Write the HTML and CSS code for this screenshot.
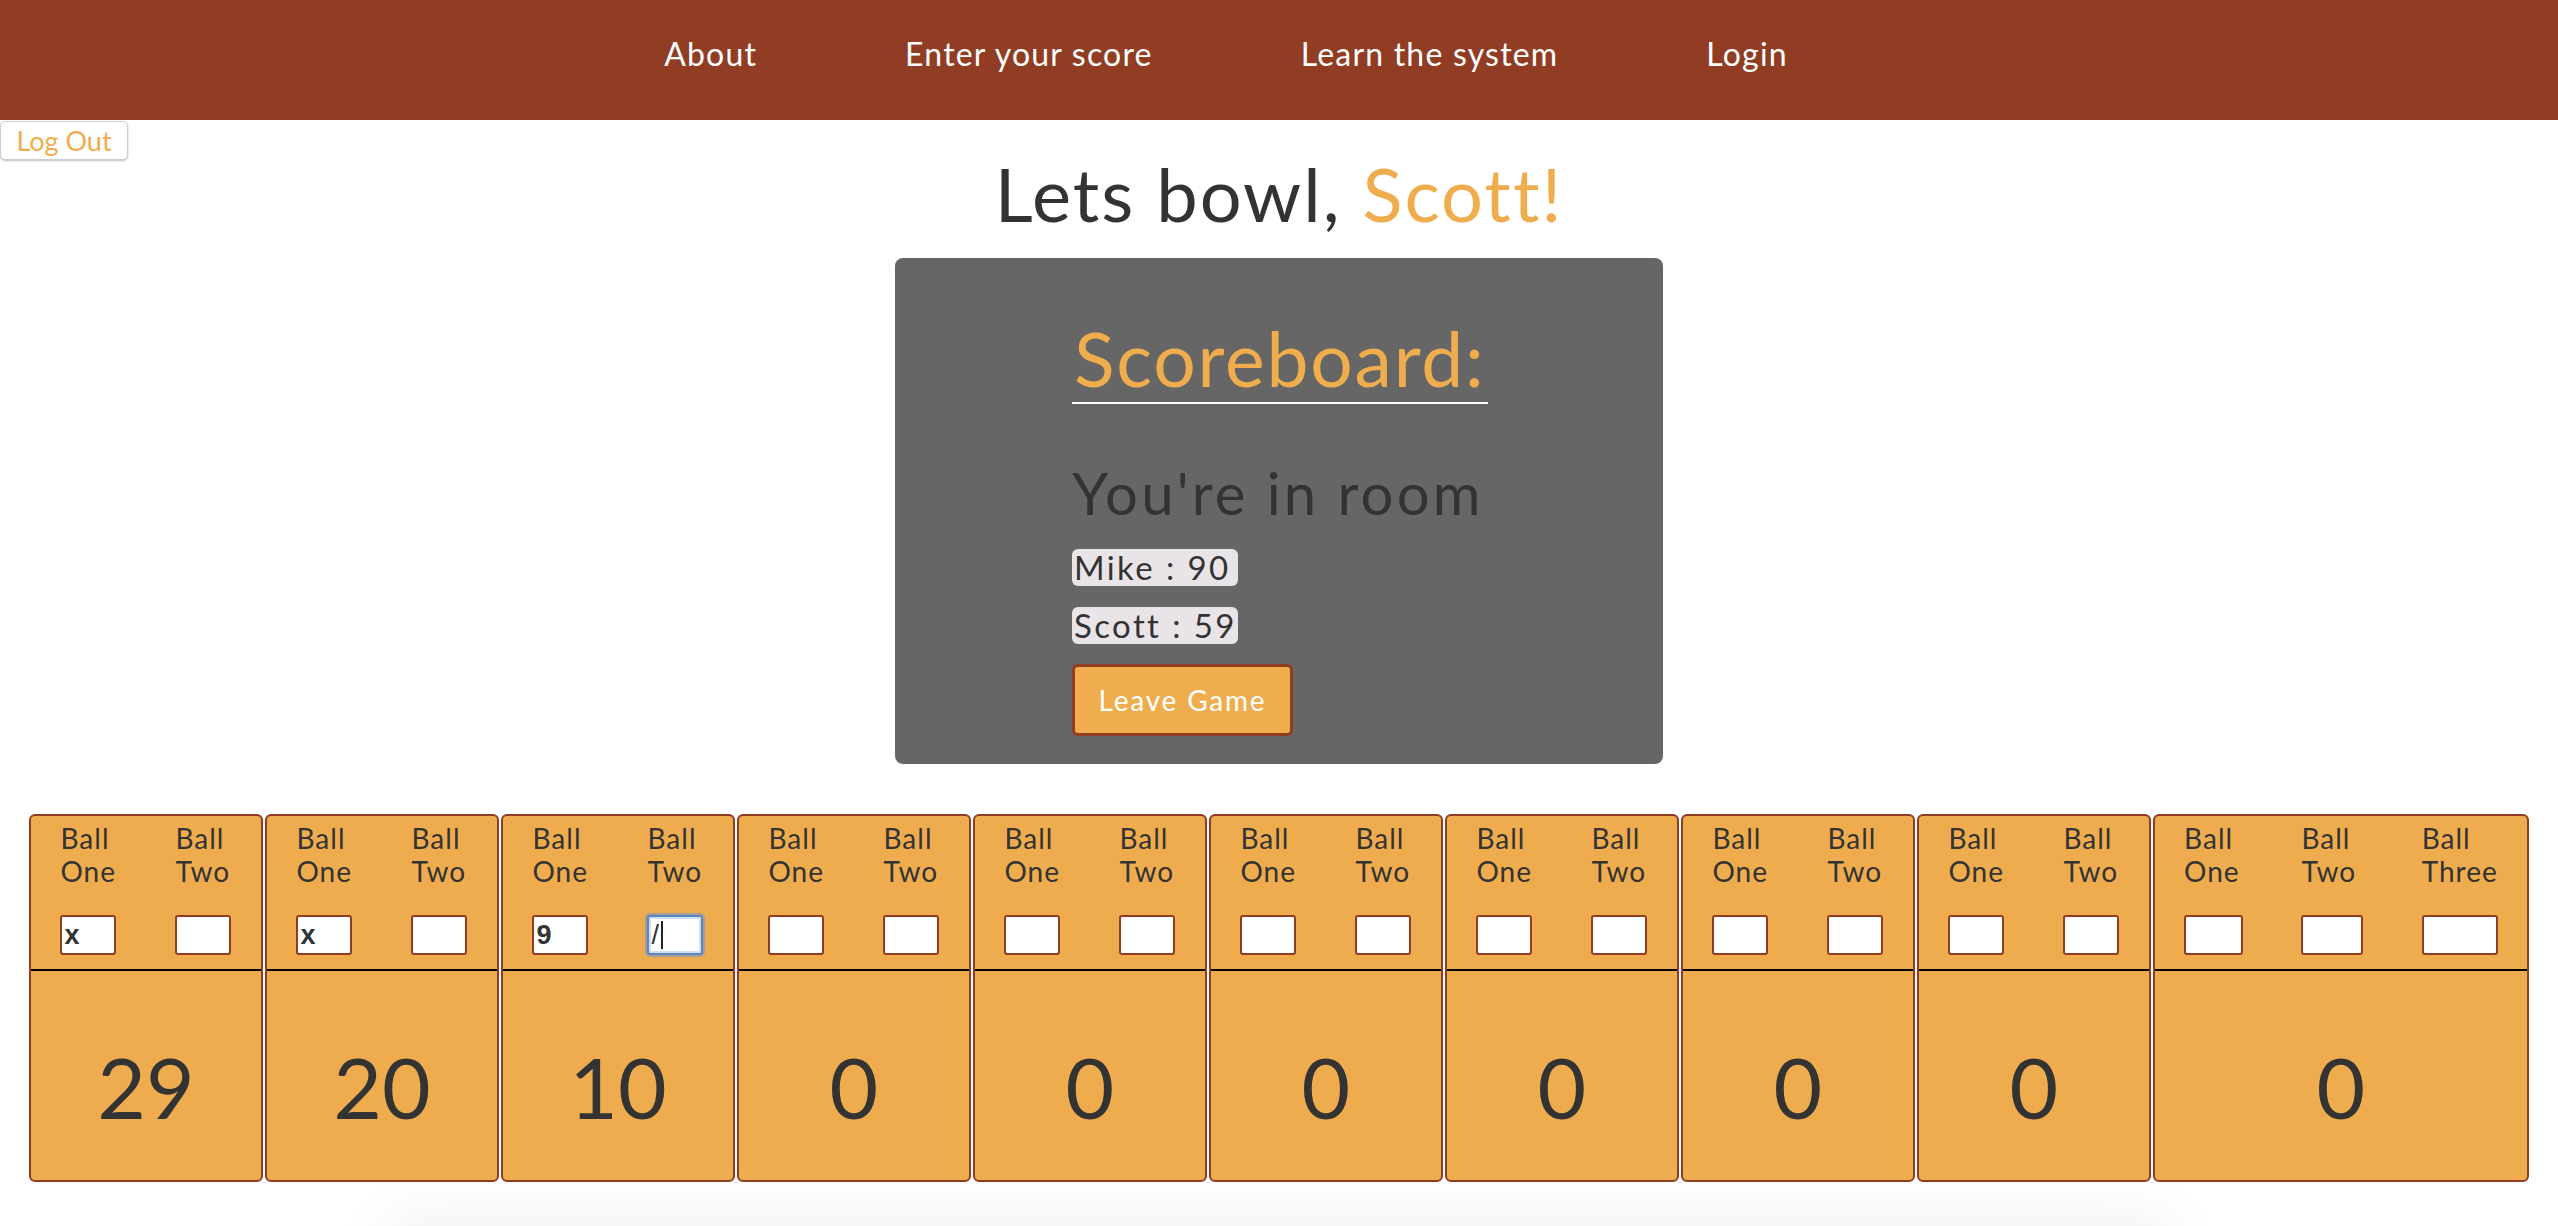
FILE: index.html
```html
<!DOCTYPE html>
<html lang="en">
<head>
<meta charset="utf-8">
<title>Lets bowl</title>
<link rel="stylesheet" href="styles.css">
</head>
<body>
<nav class="topnav">
  <a class="nav-link" href="#">About</a>
  <a class="nav-link" href="#">Enter your score</a>
  <a class="nav-link" href="#">Learn the system</a>
  <a class="nav-link" href="#">Login</a>
</nav>
<button class="logout">Log Out</button>
<h1 class="greeting">Lets bowl, <span class="accent">Scott!</span></h1>
<section class="board">
  <div class="board-inner">
    <h2 class="board-title">Scoreboard:</h2>
    <h3 class="room">You're in room</h3>
    <div class="player"><span class="pill">Mike : 90</span></div>
    <div class="player"><span class="pill">Scott : 59</span></div>
    <button class="leave">Leave Game</button>
  </div>
</section>
<div class="scorecard">
  <div class="frame">
    <div class="balls">
      <label class="ball"><span class="ball-label">Ball<br>One</span><input class="ball-input" value="x"></label>
      <label class="ball"><span class="ball-label">Ball<br>Two</span><input class="ball-input" value=""></label>
    </div>
    <div class="total">29</div>
  </div>
  <div class="frame">
    <div class="balls">
      <label class="ball"><span class="ball-label">Ball<br>One</span><input class="ball-input" value="x"></label>
      <label class="ball"><span class="ball-label">Ball<br>Two</span><input class="ball-input" value=""></label>
    </div>
    <div class="total">20</div>
  </div>
  <div class="frame">
    <div class="balls">
      <label class="ball"><span class="ball-label">Ball<br>One</span><input class="ball-input" value="9"></label>
      <label class="ball"><span class="ball-label">Ball<br>Two</span><span class="caret-wrap"><input class="ball-input focused" value="/"></span></label>
    </div>
    <div class="total">10</div>
  </div>
  <div class="frame">
    <div class="balls">
      <label class="ball"><span class="ball-label">Ball<br>One</span><input class="ball-input" value=""></label>
      <label class="ball"><span class="ball-label">Ball<br>Two</span><input class="ball-input" value=""></label>
    </div>
    <div class="total">0</div>
  </div>
  <div class="frame">
    <div class="balls">
      <label class="ball"><span class="ball-label">Ball<br>One</span><input class="ball-input" value=""></label>
      <label class="ball"><span class="ball-label">Ball<br>Two</span><input class="ball-input" value=""></label>
    </div>
    <div class="total">0</div>
  </div>
  <div class="frame">
    <div class="balls">
      <label class="ball"><span class="ball-label">Ball<br>One</span><input class="ball-input" value=""></label>
      <label class="ball"><span class="ball-label">Ball<br>Two</span><input class="ball-input" value=""></label>
    </div>
    <div class="total">0</div>
  </div>
  <div class="frame">
    <div class="balls">
      <label class="ball"><span class="ball-label">Ball<br>One</span><input class="ball-input" value=""></label>
      <label class="ball"><span class="ball-label">Ball<br>Two</span><input class="ball-input" value=""></label>
    </div>
    <div class="total">0</div>
  </div>
  <div class="frame">
    <div class="balls">
      <label class="ball"><span class="ball-label">Ball<br>One</span><input class="ball-input" value=""></label>
      <label class="ball"><span class="ball-label">Ball<br>Two</span><input class="ball-input" value=""></label>
    </div>
    <div class="total">0</div>
  </div>
  <div class="frame">
    <div class="balls">
      <label class="ball"><span class="ball-label">Ball<br>One</span><input class="ball-input" value=""></label>
      <label class="ball"><span class="ball-label">Ball<br>Two</span><input class="ball-input" value=""></label>
    </div>
    <div class="total">0</div>
  </div>
  <div class="frame tenth">
    <div class="balls">
      <label class="ball"><span class="ball-label">Ball<br>One</span><input class="ball-input" value=""></label>
      <label class="ball"><span class="ball-label">Ball<br>Two</span><input class="ball-input" value=""></label>
      <label class="ball"><span class="ball-label">Ball<br>Three</span><input class="ball-input" value=""></label>
    </div>
    <div class="total">0</div>
  </div>
</div>
<div class="below"></div>
</body>
</html>
```

FILE: styles.css
```css
html, body {
  margin: 0;
  padding: 0;
  background: #ffffff;
}
body {
  font-family: Lato, "Open Sans", sans-serif;
  color: #333333;
}
.topnav {
  height: 120px;
  background: #913d23;
  display: flex;
  justify-content: center;
  align-items: center;
  gap: 148px;
  padding-right: 106px;
  padding-bottom: 12px;
  box-sizing: border-box;
}
.nav-link {
  color: #ffffff;
  text-decoration: none;
  font-size: 32px;
  line-height: 36px;
  letter-spacing: 1.2px;
}
.logout {
  display: block;
  margin: 1px 0 0 0;
  height: 39px;
  width: 128px;
  padding: 0;
  background: #ffffff;
  border: 1px solid #cfcfcf;
  border-radius: 5px;
  box-shadow: 0 1px 2px rgba(0, 0, 0, 0.25);
  color: #f0ad4e;
  font-family: Lato, sans-serif;
  font-size: 27px;
  line-height: 37px;
}
.greeting {
  margin: 2px 0 32px 0;
  font-size: 74px;
  line-height: 64px;
  font-weight: 400;
  letter-spacing: 2px;
  text-align: center;
  color: #333333;
}
.accent {
  color: #f0ad4e;
}
.board {
  width: 768px;
  height: 506px;
  margin: 0 auto;
  background: #666666;
  border-radius: 8px;
  padding-top: 63px;
  box-sizing: border-box;
  display: flex;
  justify-content: center;
}
.board-inner {
  width: 414px;
}
.board-title {
  display: inline-block;
  margin: 0;
  font-size: 75px;
  line-height: 75px;
  font-weight: 400;
  letter-spacing: 1.8px;
  color: #f0ad4e;
  padding: 0 2px 6px 2px;
  border-bottom: 2px solid #ffffff;
  white-space: nowrap;
}
.room {
  margin: 60px 0 0 0;
  font-size: 58px;
  line-height: 58px;
  font-weight: 400;
  letter-spacing: 3.2px;
  white-space: nowrap;
  color: #333333;
}
.player {
  margin-top: 27px;
  line-height: 0;
}
.player + .player {
  margin-top: 21px;
}
.pill {
  display: inline-block;
  width: 166px;
  box-sizing: border-box;
  padding-left: 2px;
  height: 37px;
  line-height: 37px;
  font-size: 33px;
  letter-spacing: 2.4px;
  white-space: nowrap;
  background: #e8e4e8;
  border-radius: 6px;
  color: #333333;
}
.leave {
  display: block;
  margin-top: 20px;
  width: 221px;
  height: 72px;
  background: #f0ad4e;
  border: 3px solid #913d23;
  border-radius: 6px;
  color: #ffffff;
  font-family: Lato, sans-serif;
  font-size: 28px;
  letter-spacing: 1.8px;
  padding: 0;
}
.scorecard {
  width: 2500px;
  margin: 50px auto 0 auto;
  display: grid;
  grid-template-columns: repeat(9, 1fr) 1.607fr;
  gap: 2px;
}
.frame {
  background: #efac4e;
  border: 2px solid #913d23;
  border-radius: 6px;
  height: 368px;
  box-sizing: border-box;
  display: flex;
  flex-direction: column;
}
.balls {
  height: 147px;
  border-bottom: 2px solid #000000;
  display: flex;
  justify-content: space-around;
  align-items: flex-start;
  padding-top: 6px;
  box-sizing: content-box;
}
.ball {
  display: flex;
  flex-direction: column;
  font-size: 28px;
  line-height: 33px;
  letter-spacing: 1px;
  color: #333333;
}
.ball-label {
  min-width: 56px;
}
.tenth .ball:nth-child(1) .ball-label {
  min-width: 59px;
}
.tenth .ball:nth-child(2) .ball-label {
  min-width: 62px;
}
.ball-input {
  margin-top: 27px;
  width: 0;
  min-width: 100%;
  height: 40px;
  box-sizing: border-box;
  border: 2px solid #913d23;
  border-radius: 3px;
  background: #ffffff;
  font-family: "Liberation Sans", Arial, sans-serif;
  font-size: 27px;
  font-weight: 700;
  letter-spacing: 0;
  color: #333333;
  padding: 0 2px;
  outline: none;
}
.caret-wrap {
  position: relative;
  display: flex;
  flex-direction: column;
}
.caret-wrap::after {
  content: "";
  position: absolute;
  left: 14px;
  top: 33px;
  width: 2px;
  height: 28px;
  background: #222222;
}
.ball-input.focused {
  border-color: #5b86c2;
  box-shadow: inset 0 0 0 2px #cfe0f6, 0 0 0 2px rgba(110, 150, 205, 0.55);
  font-weight: 400;
}
.total {
  flex: 1;
  display: flex;
  align-items: center;
  justify-content: center;
  padding-top: 22px;
  font-size: 84px;
  line-height: 84px;
  color: #333333;
}
.below {
  width: 1760px;
  height: 400px;
  margin: 50px auto 0 auto;
  background: #efefef;
  box-shadow: 0 0 60px 10px rgba(0, 0, 0, 0.07);
}
```
